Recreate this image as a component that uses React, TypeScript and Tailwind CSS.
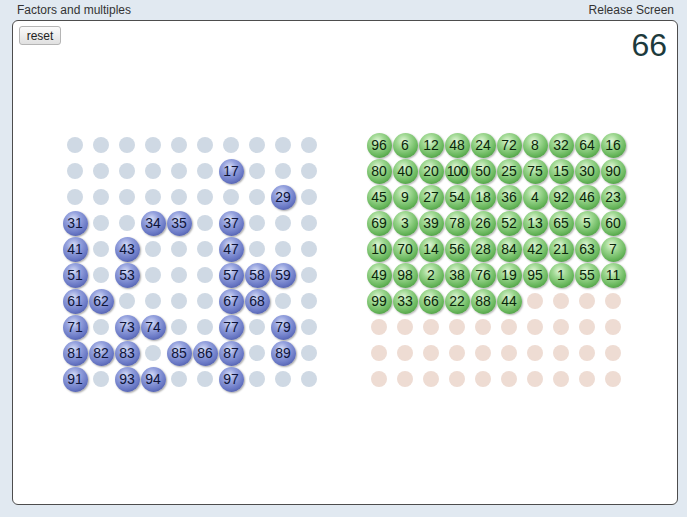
import React from 'react';

const blueOn = new Set([17, 29, 31, 34, 35, 37, 41, 43, 47, 51, 53, 57, 58, 59, 61, 62, 67, 68, 71, 73, 74, 77, 79, 81, 82, 83, 85, 86, 87, 89, 91, 93, 94, 97]);

const greens = [
  96, 6, 12, 48, 24, 72, 8, 32, 64, 16,
  80, 40, 20, 100, 50, 25, 75, 15, 30, 90,
  45, 9, 27, 54, 18, 36, 4, 92, 46, 23,
  69, 3, 39, 78, 26, 52, 13, 65, 5, 60,
  10, 70, 14, 56, 28, 84, 42, 21, 63, 7,
  49, 98, 2, 38, 76, 19, 95, 1, 55, 11,
  99, 33, 66, 22, 88, 44,
];

function Ball({ n, tone }: { n: number; tone: 'blue' | 'green' }) {
  const cls =
    tone === 'blue'
      ? 'bg-[radial-gradient(circle_at_42%_32%,#d8def6_0%,#95a2de_30%,#6877c4_65%,#38438f_100%)] text-[#0e1438] shadow-[1px_1px_2px_rgba(0,0,0,0.35)]'
      : 'bg-[radial-gradient(circle_at_42%_32%,#e2f6d8_0%,#9fd892_30%,#67b65b_65%,#33802b_100%)] text-[#0a260a] shadow-[1px_1px_2px_rgba(0,0,0,0.3)]';
  return (
    <div
      className={`w-[25px] h-[25px] rounded-full flex items-center justify-center text-[14px] leading-none ${cls} ${n >= 100 ? 'tracking-[-1px]' : ''}`}
    >
      {n}
    </div>
  );
}

function Dot({ tone }: { tone: 'blue' | 'peach' }) {
  return (
    <div
      className={`w-[16px] h-[16px] rounded-full ${tone === 'blue' ? 'bg-[#cfd9e4]' : 'bg-[#eedcd3]'}`}
    />
  );
}

function Cell({ children }: { children: React.ReactNode }) {
  return <div className="w-[26px] h-[26px] flex items-center justify-center">{children}</div>;
}

export default function App() {
  const left = Array.from({ length: 100 }, (_, i) => i + 1);
  const right = Array.from({ length: 100 }, (_, i) => greens[i]);

  return (
    <div className="w-[687px] h-[517px] bg-[#e1e9f1] flex flex-col font-['Liberation_Sans',Arial,sans-serif] overflow-hidden">
      <div className="h-[20px] flex items-center justify-between pl-[17px] pr-[13px] text-[12px] text-[#333]">
        <span>Factors and multiples</span>
        <span>Release Screen</span>
      </div>
      <div className="ml-[12px] w-[666px] h-[485px] bg-white border border-[#4d4d4d] rounded-[6px] flex flex-col">
        <div className="h-[44px] flex items-start justify-between">
          <button className="ml-[6px] mt-[5px] w-[42px] h-[19px] text-[12px] text-[#222] border border-[#b5b5b5] rounded-[3px] bg-[linear-gradient(#fbfbfb,#e0e0e0)] flex items-center justify-center">
            reset
          </button>
          <div className="mr-[10px] mt-[8px] text-[32px] leading-none text-[#1d3a3c]">66</div>
        </div>
        <div className="mt-[67px] ml-[49px] flex gap-[44px]">
          <div className="grid grid-cols-[repeat(10,26px)]">
            {left.map(n => (
              <Cell key={n}>{blueOn.has(n) ? <Ball n={n} tone="blue" /> : <Dot tone="blue" />}</Cell>
            ))}
          </div>
          <div className="grid grid-cols-[repeat(10,26px)]">
            {right.map((n, i) => (
              <Cell key={i}>{n ? <Ball n={n} tone="green" /> : <Dot tone="peach" />}</Cell>
            ))}
          </div>
        </div>
      </div>
    </div>
  );
}
